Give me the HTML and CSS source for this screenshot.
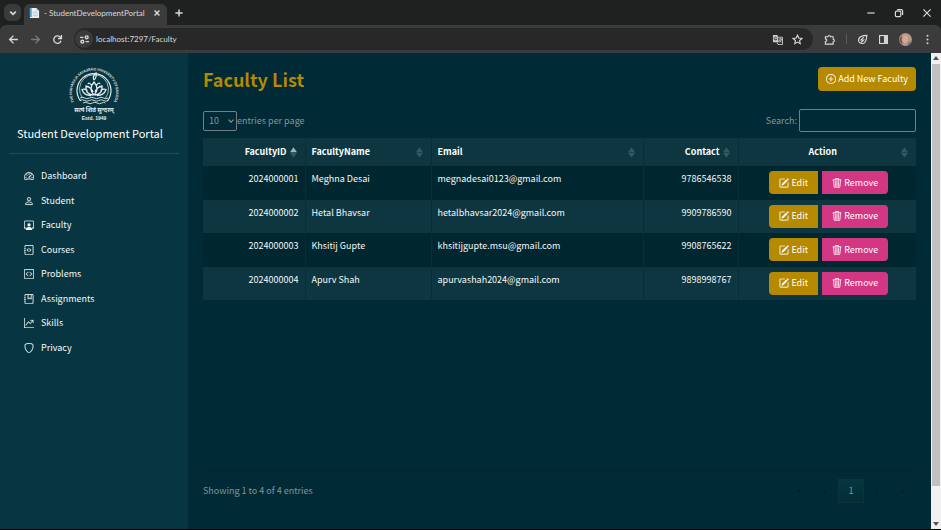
FILE: index.html
```html
<!DOCTYPE html>
<html lang="en">
<head>
<meta charset="utf-8">
<meta name="viewport" content="width=device-width, initial-scale=1">
<title>- StudentDevelopmentPortal</title>
<link rel="stylesheet" href="styles.css">
</head>
<body>
<svg class="defs" aria-hidden="true">
  <symbol id="edit" viewBox="0 0 16 16"><path d="M15.502 1.94a.5.5 0 0 1 0 .706L14.459 3.69l-2-2L13.502.646a.5.5 0 0 1 .707 0l1.293 1.293zm-1.75 2.456-2-2L4.939 9.21a.5.5 0 0 0-.121.196l-.805 2.414a.25.25 0 0 0 .316.316l2.414-.805a.5.5 0 0 0 .196-.12l6.813-6.814z"/><path d="M1 13.500A1.500 1.500 0 0 0 2.500 15h11a1.500 1.500 0 0 0 1.500-1.500v-6a.5.5 0 0 0-1 0v6a.5.5 0 0 1-.5.5h-11a.5.5 0 0 1-.5-.5v-11a.5.5 0 0 1 .5-.5H9a.5.5 0 0 0 0-1H2.500A1.500 1.500 0 0 0 1 2.500z"/></symbol>
  <symbol id="trash" viewBox="0 0 16 16"><path d="M6.500 1h3a.5.5 0 0 1 .5.5v1H6v-1a.5.5 0 0 1 .5-.5M11 2.500v-1A1.500 1.500 0 0 0 9.500 0h-3A1.500 1.500 0 0 0 5 1.500v1H1.500a.5.5 0 0 0 0 1h.538l.853 10.660A2 2 0 0 0 4.885 16h6.230a2 2 0 0 0 1.994-1.840l.853-10.660h.538a.5.5 0 0 0 0-1zm1.958 1-.846 10.580a1 1 0 0 1-.997.920h-6.230a1 1 0 0 1-.997-.920L3.042 3.500zm-7.487 1a.5.5 0 0 1 .528.470l.5 8.500a.5.5 0 0 1-.998.060L5 5.030a.5.5 0 0 1 .470-.530zm5.058 0a.5.5 0 0 1 .470.530l-.5 8.500a.5.5 0 1 1-.998-.060l.5-8.500a.5.5 0 0 1 .528-.470M8 4.500a.5.5 0 0 1 .5.5v8.500a.5.5 0 0 1-1 0V5a.5.5 0 0 1 .5-.5"/></symbol>
  <symbol id="sort" viewBox="0 0 8 12"><path class="up" d="M0 5.700 4 0l4 5.700z"/><path class="down" d="M0 6.300h8L4 12z"/></symbol>
</svg>

<header class="browser">
  <div class="tabs">
    <button class="tab-search" aria-label="Search tabs"><svg viewBox="0 0 10 10"><path class="line" d="m3 4 2 2 2-2"/></svg></button>
    <div class="tab">
      <svg class="favicon" viewBox="0 0 12 12"><path fill="#e9f1f5" d="M1 1h7l3 3v8H1z"/><path fill="#5aa5cf" d="M1 1h2v10H1z"/><path fill="#b9c7ce" d="M8 1v3h3zM4 5h5v1H4zM4 7h6v1H4zM4 9h6v1H4z"/></svg>
      <span class="tab-title">- StudentDevelopmentPortal</span>
      <button class="plain" aria-label="Close tab"><svg viewBox="0 0 10 10"><path class="line" d="m3 3 4 4m0-4L3 7"/></svg></button>
    </div>
    <button class="plain new-tab" aria-label="New tab"><svg viewBox="0 0 10 10"><path class="line" d="M5 2v6M2 5h6"/></svg></button>
    <div class="window-buttons">
      <button class="plain" aria-label="Minimize"><svg viewBox="0 0 10 10"><path class="thin" d="M2 5h6"/></svg></button>
      <button class="plain" aria-label="Restore"><svg viewBox="0 0 10 10"><rect class="thin" x="2" y="3.500" width="4.500" height="4.500" rx="1"/><path class="thin" d="M3.500 2.200h3.300q1.200 0 1.200 1.200v3.300"/></svg></button>
      <button class="plain" aria-label="Close"><svg viewBox="0 0 10 10"><path class="thin" d="m2 2 6 6m0-6L2 8"/></svg></button>
    </div>
  </div>
  <div class="toolbar">
    <button class="plain" aria-label="Back"><svg viewBox="0 0 10 10"><path class="line" d="M9 5H1.500M5 1.500 1.500 5 5 8.500"/></svg></button>
    <button class="plain faded" aria-label="Forward"><svg viewBox="0 0 10 10"><path class="line" d="M1 5h7.500M5 1.500 8.500 5 5 8.500"/></svg></button>
    <button class="plain" aria-label="Reload"><svg viewBox="0 0 10 10"><path class="line" d="M8.200 6.200A3.400 3.400 0 1 1 7.700 3L8.500 4M8.600 1v3.100H5.500"/></svg></button>
    <div class="address">
      <button class="site-info" aria-label="Site information"><svg viewBox="0 0 10 10"><path class="line" d="M1 3h3M6 7h3"/><circle class="line" cx="7" cy="3" r="1.300"/><circle class="line" cx="3" cy="7" r="1.300"/></svg></button>
      <input class="url" aria-label="Address" value="localhost:7297/Faculty">
      <button class="plain" aria-label="Translate"><svg viewBox="0 0 12 12"><path fill="#c9cbcc" d="M1 1h5l1.500 8H1z"/><path fill="none" stroke="#c9cbcc" d="M6.500 3.500h5v8H6.500L5.500 9M7.500 5.500h3.500M9 4.500v1M10.500 5.500Q10 8 7.500 9M8 6.500q1 2 2.500 2.500"/><path fill="none" stroke="#292a2a" stroke-width=".9" d="M5 4a1.500 1.500 0 1 0 .2 1.500H3.800"/></svg></button>
      <button class="plain" aria-label="Bookmark"><svg viewBox="0 0 12 12"><path class="line" d="m6 1.300 1.400 3.100 3.400.4-2.500 2.300.7 3.400-3-1.700-3 1.700.7-3.400L1.200 4.800l3.400-.4z"/></svg></button>
    </div>
    <div class="extensions">
      <button class="plain" aria-label="Extensions"><svg viewBox="0 0 12 12"><path class="line" d="M1.500 3h2.800a1.400 1.400 0 0 1 2.800 0h2.900v2.800a1.400 1.400 0 0 1 0 2.800v2.400H1.500V8.300q1.600-.2 1.600-1.500T1.500 5.300z"/></svg></button>
      <span class="divider"></span>
      <button class="plain" aria-label="Energy saver"><svg viewBox="0 0 12 12"><path class="line" d="M10.800 1.500C6 1.500 1.500 3 1.700 7c.1 2.500 3 4 5.500 3.200 3-1 3-5 3.600-8.700zM7.500 3.500 4.300 6.500h3L4.500 9"/></svg></button>
      <button class="plain" aria-label="Side panel"><svg viewBox="0 0 12 12"><rect class="line" x="1.700" y="1.700" width="8.600" height="8.600"/><path fill="#d0d2d3" d="M6.500 1.500h4v9h-4z"/></svg></button>
      <button class="plain profile" aria-label="Profile"><svg viewBox="0 0 14 14"><circle cx="7" cy="7" r="7" fill="#b79686"/><path fill="#d8a78d" d="M5 3q4-2 5 2l-1 5-3 1-2-3z"/><path fill="#3783a3" d="M9 13q1-4 4-4-1 3-4 4z"/><path fill="#705047" d="M3 3Q2 7 4 12 0 10 .7 6z"/></svg></button>
      <button class="plain" aria-label="Menu"><svg viewBox="0 0 12 12"><g fill="#d0d2d3"><circle cx="6" cy="2" r="1.100"/><circle cx="6" cy="6" r="1.100"/><circle cx="6" cy="10" r="1.100"/></g></svg></button>
    </div>
  </div>
</header>

<div class="page">
  <aside class="sidebar">
    <svg class="seal" viewBox="0 0 56 56" role="img" aria-label="University seal">
      <svg width="56" height="56" viewBox="0 0 112 112">
        <path id="arc" fill="none" d="M20.600 79A44 44 0 1 1 91.400 79"/>
        <text class="seal-ring"><textPath href="#arc" startOffset="50%">THE MAHARAJA SAYAJIRAO UNIVERSITY OF BARODA</textPath></text>
      </svg>
      <g fill="none" stroke="#e4ecee">
        <path stroke-width="1.200" d="M14.500 35A17 17 0 1 1 41.500 35"/>
        <path stroke-width=".7" d="M16.500 32A14.500 14.500 0 1 1 39.500 32"/>
        <path stroke-width=".9" d="M14 32q2.300-1.500 4.700 0t4.700 0 4.700 0 4.700 0 4.700 0 4.700 0M14 34.500q2.300-1.500 4.700 0t4.700 0 4.700 0 4.700 0 4.700 0 4.700 0M17 37q2.300-1.500 4.700 0t4.700 0 4.700 0 4.700 0 3.500 0"/>
        <path stroke-width="1.300" d="M28 29q-6-6 0-13 6 7 0 13zM27 29q-8-1-7-9 5 1 7 6M29 29q8-1 7-9-5 1-7 6M25 29.500q-7 0-9-6 3-1 5.500 1M31 29.500q7 0 9-6-3-1-5.500 1M22 18q1-2 3.500 1M34 18q-1-2-3.500 1"/>
        <path stroke-width="1.200" d="M28 14q-2-3 2-7 1 4-2 7"/>
      </g>
      <text class="seal-motto" x="28" y="46">सत्यं शिवं सुन्दरम्</text>
      <text class="seal-year" x="28" y="54">Estd. 1949</text>
    </svg>
    <div class="brand">Student Development Portal</div>
    <nav class="menu">
      <a href="#"><svg viewBox="0 0 16 16"><path d="M8 4a.5.5 0 0 1 .5.5V6a.5.5 0 0 1-1 0V4.500A.5.5 0 0 1 8 4M3.732 5.732a.5.5 0 0 1 .707 0l.915.914a.5.5 0 1 1-.708.708l-.914-.915a.5.5 0 0 1 0-.707M2 10a.5.5 0 0 1 .5-.5h1.586a.5.5 0 0 1 0 1H2.500A.5.5 0 0 1 2 10m9.500 0a.5.5 0 0 1 .5-.5h1.500a.5.5 0 0 1 0 1H12a.5.5 0 0 1-.5-.5m.754-4.246a.39.39 0 0 0-.527-.020L7.547 9.310a.91.91 0 1 0 1.302 1.258l3.434-4.297a.39.39 0 0 0-.029-.518z"/><path fill-rule="evenodd" d="M0 10a8 8 0 1 1 15.547 2.661c-.442 1.253-1.845 1.602-2.932 1.250C11.309 13.488 9.475 13 8 13c-1.474 0-3.310.488-4.615.911-1.087.352-2.490.003-2.932-1.250A8 8 0 0 1 0 10m8-7a7 7 0 0 0-6.603 9.329c.203.575.923.876 1.680.630C4.397 12.533 6.358 12 8 12s3.604.532 4.923.960c.757.245 1.477-.056 1.680-.631A7 7 0 0 0 8 3"/></svg>Dashboard</a>
      <a href="#"><svg viewBox="0 0 16 16"><path d="M8 8a3 3 0 1 0 0-6 3 3 0 0 0 0 6m2-3a2 2 0 1 1-4 0 2 2 0 0 1 4 0m4 8c0 1-1 1-1 1H3s-1 0-1-1 1-4 6-4 6 3 6 4m-1-.004c-.001-.246-.154-.986-.832-1.664C11.516 10.680 10.289 10 8 10s-3.516.680-4.168 1.332c-.678.678-.830 1.418-.832 1.664z"/></svg>Student</a>
      <a href="#"><svg viewBox="0 0 16 16"><path d="M4 16s-1 0-1-1 1-4 5-4 5 3 5 4-1 1-1 1zm4-5.950a2.500 2.500 0 1 0 0-5 2.500 2.500 0 0 0 0 5"/><path d="M2 1a2 2 0 0 0-2 2v9.500A1.500 1.500 0 0 0 1.500 14h.653a5.400 5.400 0 0 1 1.066-2H1V3a1 1 0 0 1 1-1h12a1 1 0 0 1 1 1v9h-2.219c.554.654.890 1.373 1.066 2h.653a1.500 1.500 0 0 0 1.500-1.500V3a2 2 0 0 0-2-2z"/></svg>Faculty</a>
      <a href="#"><svg viewBox="0 0 16 16"><path fill-rule="evenodd" d="M8.646 5.646a.5.5 0 0 1 .708 0l2 2a.5.5 0 0 1 0 .708l-2 2a.5.5 0 0 1-.708-.708L10.293 8 8.646 6.354a.5.5 0 0 1 0-.708m-1.292 0a.5.5 0 0 0-.708 0l-2 2a.5.5 0 0 0 0 .708l2 2a.5.5 0 0 0 .708-.708L5.707 8l1.647-1.646a.5.5 0 0 0 0-.708"/><path d="M3 0h10a2 2 0 0 1 2 2v12a2 2 0 0 1-2 2H3a2 2 0 0 1-2-2v-1h1v1a1 1 0 0 0 1 1h10a1 1 0 0 0 1-1V2a1 1 0 0 0-1-1H3a1 1 0 0 0-1 1v1H1V2a2 2 0 0 1 2-2"/><path d="M1 5v-.5a.5.5 0 0 1 1 0V5h.5a.5.5 0 0 1 0 1h-2a.5.5 0 0 1 0-1zm0 3v-.5a.5.5 0 0 1 1 0V8h.5a.5.5 0 0 1 0 1h-2a.5.5 0 0 1 0-1zm0 3v-.5a.5.5 0 0 1 1 0v.5h.5a.5.5 0 0 1 0 1h-2a.5.5 0 0 1 0-1z"/></svg>Courses</a>
      <a href="#"><svg viewBox="0 0 16 16"><path d="M14 1a1 1 0 0 1 1 1v12a1 1 0 0 1-1 1H2a1 1 0 0 1-1-1V2a1 1 0 0 1 1-1zM2 0a2 2 0 0 0-2 2v12a2 2 0 0 0 2 2h12a2 2 0 0 0 2-2V2a2 2 0 0 0-2-2z"/><path d="M6.854 4.646a.5.5 0 0 1 0 .708L4.207 8l2.647 2.646a.5.5 0 0 1-.708.708l-3-3a.5.5 0 0 1 0-.708l3-3a.5.5 0 0 1 .708 0m2.292 0a.5.5 0 0 0 0 .708L11.793 8l-2.647 2.646a.5.5 0 0 0 .708.708l3-3a.5.5 0 0 0 0-.708l-3-3a.5.5 0 0 0-.708 0"/></svg>Problems</a>
      <a href="#"><svg viewBox="0 0 16 16"><path fill-rule="evenodd" d="M6 8V1h1v6.117L8.743 6.070a.5.5 0 0 1 .514 0L11 7.117V1h1v7a.5.5 0 0 1-.757.429L9 7.083 6.757 8.430A.5.5 0 0 1 6 8"/><path d="M3 0h10a2 2 0 0 1 2 2v12a2 2 0 0 1-2 2H3a2 2 0 0 1-2-2v-1h1v1a1 1 0 0 0 1 1h10a1 1 0 0 0 1-1V2a1 1 0 0 0-1-1H3a1 1 0 0 0-1 1v1H1V2a2 2 0 0 1 2-2"/><path d="M1 5v-.5a.5.5 0 0 1 1 0V5h.5a.5.5 0 0 1 0 1h-2a.5.5 0 0 1 0-1zm0 3v-.5a.5.5 0 0 1 1 0V8h.5a.5.5 0 0 1 0 1h-2a.5.5 0 0 1 0-1zm0 3v-.5a.5.5 0 0 1 1 0v.5h.5a.5.5 0 0 1 0 1h-2a.5.5 0 0 1 0-1z"/></svg>Assignments</a>
      <a href="#"><svg viewBox="0 0 16 16"><path fill-rule="evenodd" d="M0 0h1v15h15v1H0zm10 3.500a.5.5 0 0 1 .5-.5h4a.5.5 0 0 1 .5.5v4a.5.5 0 0 1-1 0V4.900l-3.613 4.417a.5.5 0 0 1-.740.037L7.060 6.767l-3.656 5.027a.5.5 0 0 1-.808-.588l4-5.500a.5.5 0 0 1 .758-.060l2.609 2.610L13.445 4H10.500a.5.5 0 0 1-.5-.5"/></svg>Skills</a>
      <a href="#"><svg viewBox="0 0 16 16"><path d="M5.338 1.590a61 61 0 0 0-2.837.856.48.48 0 0 0-.328.390c-.554 4.157.726 7.190 2.253 9.188a10.700 10.700 0 0 0 2.287 2.233c.346.244.652.420.893.533q.180.085.293.118a1 1 0 0 0 .101.025 1 1 0 0 0 .1-.025q.114-.034.294-.118c.240-.113.547-.290.893-.533a10.700 10.700 0 0 0 2.287-2.233c1.527-1.997 2.807-5.031 2.253-9.188a.48.48 0 0 0-.328-.390c-.651-.213-1.750-.560-2.837-.855C9.552 1.290 8.531 1.067 8 1.067c-.530 0-1.552.223-2.662.524zM5.072.560C6.157.265 7.310 0 8 0s1.843.265 2.928.560c1.110.300 2.229.655 2.887.870a1.540 1.540 0 0 1 1.044 1.262c.596 4.477-.787 7.795-2.465 9.990a11.800 11.800 0 0 1-2.517 2.453 7 7 0 0 1-1.048.625c-.280.132-.581.240-.829.240s-.548-.108-.829-.240a7 7 0 0 1-1.048-.625 11.800 11.800 0 0 1-2.517-2.453C1.928 10.487.545 7.169 1.141 2.692A1.540 1.540 0 0 1 2.185 1.430 63 63 0 0 1 5.072.560"/></svg>Privacy</a>
    </nav>
  </aside>

  <main class="content">
    <div class="heading">
      <h1>Faculty List</h1>
      <button class="btn gold add"><svg viewBox="0 0 16 16"><path d="M8 15A7 7 0 1 1 8 1a7 7 0 0 1 0 14m0 1A8 8 0 1 0 8 0a8 8 0 0 0 0 16"/><path d="M8 4a.5.5 0 0 1 .5.5v3h3a.5.5 0 0 1 0 1h-3v3a.5.5 0 0 1-1 0v-3h-3a.5.5 0 0 1 0-1h3v-3A.5.5 0 0 1 8 4"/></svg>Add New Faculty</button>
    </div>
    <div class="filters">
      <div class="length">
        <span class="select-box">
          <select id="length"><option>10</option><option>25</option><option>50</option></select>
          <svg viewBox="0 0 8 8"><path class="line" d="m1.500 2.700L4 5.200l2.500-2.500"/></svg>
        </span>
        <label for="length">entries per page</label>
      </div>
      <div class="search"><label for="search">Search:</label><input id="search" type="search"></div>
    </div>
    <div class="table-area">
      <table>
        <colgroup><col class="c-id"><col class="c-name"><col class="c-email"><col class="c-contact"><col class="c-action"></colgroup>
        <thead><tr>
          <th><div class="th end"><span>FacultyID</span><svg class="asc"><use href="#sort"/></svg></div></th>
          <th><div class="th"><span>FacultyName</span><svg><use href="#sort"/></svg></div></th>
          <th><div class="th"><span>Email</span><svg><use href="#sort"/></svg></div></th>
          <th><div class="th end"><span>Contact</span><svg><use href="#sort"/></svg></div></th>
          <th><div class="th center"><span>Action</span><svg><use href="#sort"/></svg></div></th>
        </tr></thead>
        <tbody>
          <tr><td class="num">2024000001</td><td>Meghna Desai</td><td>megnadesai0123@gmail.com</td><td class="num">9786546538</td><td><div class="actions"><button class="btn gold first"><svg><use href="#edit"/></svg>Edit</button><button class="btn pink last"><svg><use href="#trash"/></svg>Remove</button></div></td></tr>
          <tr><td class="num">2024000002</td><td>Hetal Bhavsar</td><td>hetalbhavsar2024@gmail.com</td><td class="num">9909786590</td><td><div class="actions"><button class="btn gold first"><svg><use href="#edit"/></svg>Edit</button><button class="btn pink last"><svg><use href="#trash"/></svg>Remove</button></div></td></tr>
          <tr><td class="num">2024000003</td><td>Khsitij Gupte</td><td>khsitijgupte.msu@gmail.com</td><td class="num">9908765622</td><td><div class="actions"><button class="btn gold first"><svg><use href="#edit"/></svg>Edit</button><button class="btn pink last"><svg><use href="#trash"/></svg>Remove</button></div></td></tr>
          <tr><td class="num">2024000004</td><td>Apurv Shah</td><td>apurvashah2024@gmail.com</td><td class="num">9898998767</td><td><div class="actions"><button class="btn gold first"><svg><use href="#edit"/></svg>Edit</button><button class="btn pink last"><svg><use href="#trash"/></svg>Remove</button></div></td></tr>
        </tbody>
      </table>
    </div>
    <footer class="summary">
      <span>Showing 1 to 4 of 4 entries</span>
      <div class="pages">
        <button disabled>«</button><button disabled>‹</button><button class="current">1</button><button disabled>›</button><button disabled>»</button>
      </div>
    </footer>
  </main>
  <div class="scrollbar" aria-hidden="true">
    <svg viewBox="0 0 8 8"><path d="M1 6 4 2l3 4z"/></svg>
    <div class="thumb"></div>
    <svg viewBox="0 0 8 8"><path d="m1 2 3 4 3-4z"/></svg>
  </div>
</div>
</body>
</html>
```
FILE: styles.css
```css
* { box-sizing: border-box; }
body {
  margin: 0;
  min-height: 100vh;
  display: flex;
  flex-direction: column;
  background: #002b36;
  border-bottom: 1px solid #000;
  color: #f5f8f8;
  font: 400 9px/16px "Noto Sans CJK SC", "Noto Sans", sans-serif;
}
button, input, select { font: inherit; color: inherit; }
button { display: flex; align-items: center; justify-content: center; border: 0; padding: 0; background: none; }
svg { fill: currentColor; flex: none; }
.defs { position: absolute; width: 0; height: 0; }
.line { fill: none; stroke: currentColor; stroke-width: 1.2; }
.thin { fill: none; stroke: currentColor; stroke-width: 1; }

/* Browser frame */
.browser { background: #1f2020; color: #d8dadb; font: 8px/16px Lato, sans-serif; }
.tabs { display: flex; align-items: stretch; height: 25px; padding-left: 4px; }
.tab-search { width: 17px; height: 17px; margin-top: 4px; border-radius: 6px; background: #3a3b3b; }
.tab-search svg { width: 14px; }
.tab { display: flex; align-items: center; gap: 4px; width: 143px; margin: 4px 0 0 3px; padding: 0 4px 4px 5px; border-radius: 6px 6px 0 0; background: #3b3b3b; }
.favicon { width: 11px; height: 11px; }
.tab-title { flex: 1; min-width: 0; white-space: nowrap; }
.plain svg { width: 12px; height: 12px; }
.new-tab { margin-left: 6px; }
.window-buttons { display: flex; gap: 16px; margin-left: auto; padding-right: 8px; }
.toolbar { display: flex; align-items: center; height: 28px; padding: 0 8px; gap: 11px; background: #3b3b3b; border-radius: 6px 6px 0 0; }
.toolbar .plain svg { width: 11px; height: 11px; }
.toolbar .profile svg { width: 13px; height: 13px; }
.faded { color: #7b7c7c; }
.address { display: flex; flex: 1; align-items: center; gap: 9px; height: 22px; padding: 0 10px 0 1px; border-radius: 11px; background: #282828; }
.site-info { width: 18px; height: 18px; border-radius: 9px; background: #3b3b3b; }
.site-info svg { width: 11px; }
.url { flex: 1; min-width: 0; margin-left: -6px; padding: 0; border: 0; background: none; }
.extensions { display: flex; align-items: center; gap: 10px; }
.divider { width: 1px; height: 10px; margin-left: 1px; background: #5a5b5b; }

/* Sidebar */
.page { display: flex; flex: 1; }
.sidebar { flex: none; width: 188px; padding: 13px 9px 0; background: #073642; }
.seal { display: block; width: 56px; height: 56px; margin: 0 auto; color: #e4ecee; }
.seal-ring { font: 700 7px Lato, sans-serif; text-anchor: middle; }
.seal-motto { font: 700 6px "Noto Sans", sans-serif; text-anchor: middle; }
.seal-year { font: 700 5px "Liberation Sans", sans-serif; text-anchor: middle; }
.brand { padding: 3px 8px 12px; border-bottom: 1px solid #1f4e5a; color: #fff; font-size: 11px; white-space: nowrap; }
.menu { display: grid; grid-auto-rows: 1fr; height: 196px; margin: 10px 15px; }
.menu a { display: flex; align-items: center; gap: 7px; color: inherit; text-decoration: none; }
.menu svg { width: 10px; height: 10px; stroke: currentColor; stroke-width: .3; }

/* Content */
.content { display: flex; flex: 1; flex-direction: column; min-width: 0; padding: 14px 15px 26px; color: #839496; }
.heading { display: flex; align-items: center; justify-content: space-between; }
h1 { margin: 0; color: #b58900; font-size: 18px; line-height: 24px; }
.btn { gap: 2px; height: 24px; color: #fff; }
.btn svg { width: 10px; height: 10px; stroke: currentColor; stroke-width: .3; }
.gold { background: #b58900; }
.pink { background: #d33682; }
.add { padding: 0 8px; border-radius: 4px; }
.filters { display: flex; align-items: center; justify-content: space-between; margin: 18px 0 6px; }
.length, .search { display: flex; align-items: center; }
.select-box { display: flex; align-items: center; position: relative; }
.select-box select { appearance: none; width: 34px; height: 20px; padding: 0 5px; border: 1px solid #777b86; border-radius: 2px; background: transparent; }
.select-box svg { position: absolute; right: 2px; width: 8px; pointer-events: none; }
.search { gap: 2px; }
.search input { width: 117px; height: 23px; padding: 0 4px; border: 1px solid #777b86; border-radius: 2px; background: transparent; }
.table-area { flex: 1; border-bottom: 1px solid #03242a; }
table { width: 100%; height: 162px; table-layout: fixed; border-collapse: collapse; color: #f5f8f8; }
.c-id { width: 102px; }
.c-name { width: 126px; }
.c-email { width: 212px; }
.c-contact { width: 95px; }
th, td { padding: 5px 6px; text-align: left; vertical-align: top; border-left: 1px solid #082f39; }
th:first-child, td:first-child { border-left: 0; }
thead, tbody tr:nth-child(even) { background: #0d3640; }
tbody tr:nth-child(odd) { background: #002730; }
th { height: 28px; padding: 6px; color: #fff; font-weight: 700; }
.th { display: flex; align-items: center; justify-content: space-between; }
.th.end { justify-content: flex-end; gap: 3px; }
.th.center span { flex: 1; text-align: center; }
.th svg { width: 7px; height: 11px; margin-right: 2px; color: #345861; }
.up { fill: var(--up, currentColor); }
.asc { --up: #a3b3b7; }
.num { text-align: right; }
.actions { display: flex; justify-content: center; gap: 4px; padding-left: 3px; }
.actions .btn { height: 23px; }
.first { width: 49px; border-radius: 4px 0 0 4px; }
.last { width: 66px; border-radius: 0 4px 4px 0; }
.summary { display: flex; align-items: center; justify-content: space-between; padding-top: 8px; }
.pages { display: flex; }
.pages button { width: 26px; height: 24px; color: #00161c; }
.pages .current { border: 1px solid #0d333b; background: linear-gradient(#073640, #032c34); color: #839496; }
.scrollbar { display: flex; flex: none; flex-direction: column; align-items: center; width: 10px; padding: 1px 0; background: #f1f1f1; color: #505050; }
.scrollbar svg { width: 8px; height: 8px; }
.thumb { flex: 1; width: 8px; margin: 2px 0 34px; background: #c1c1c1; }
```
